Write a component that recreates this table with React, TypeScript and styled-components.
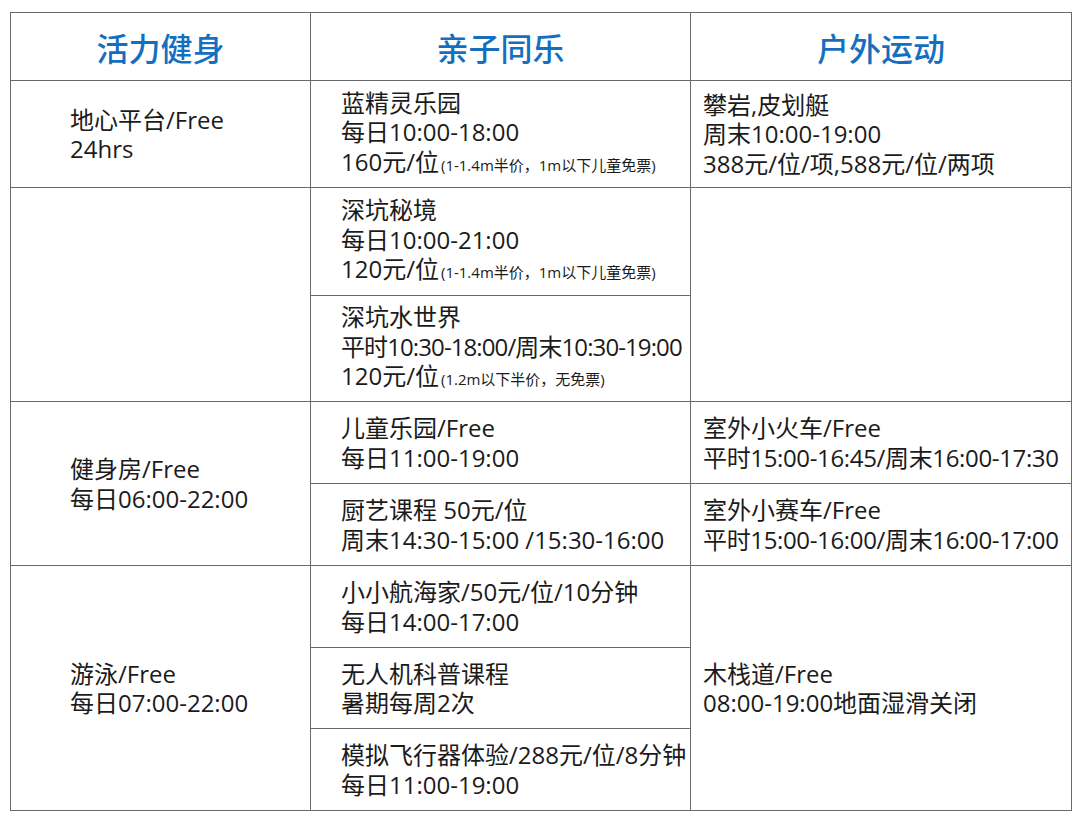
import React from "react";
import styled, { createGlobalStyle } from "styled-components";

const Global = createGlobalStyle`
  html, body { margin: 0; padding: 0; background: #ffffff; }
  body { font-family: "Open Sans", "Noto Sans CJK SC", sans-serif; color: #1b1b1b; }
`;

const Page = styled.div`
  padding: 12px 0 0 10px;
  width: 1080px;
  height: 819px;
  box-sizing: border-box;
`;

const Table = styled.div`
  display: grid;
  width: 1062px;
  box-sizing: border-box;
  grid-template-columns: 299px 379px 380px;
  grid-template-rows: 67px 106px 107px 105px 81px 81px 81px 80px 81px;
  gap: 1px;
  border: 1px solid #6a6a6a;
  background: #6a6a6a;
`;

type Col = 1 | 2 | 3;

const padFor: Record<Col, string> = {
  1: "0 8px 0 59px",
  2: "0 4px 0 30px",
  3: "0 4px 0 12px",
};

const Cell = styled.div<{ $col: Col; $row: number; $span?: number }>`
  grid-column: ${(p) => p.$col};
  grid-row: ${(p) => `${p.$row} / span ${p.$span ?? 1}`};
  background: #ffffff;
  display: flex;
  flex-direction: column;
  justify-content: center;
  padding: ${(p) => padFor[p.$col]};
  font-size: 24px;
  line-height: 29.5px;
  white-space: nowrap;
  box-sizing: border-box;
`;

const HeadCell = styled.div<{ $col: Col }>`
  grid-column: ${(p) => p.$col};
  grid-row: 1;
  background: #ffffff;
  display: flex;
  align-items: center;
  justify-content: center;
  color: #156fbf;
  font-size: 32px;
  font-family: "Noto Sans CJK SC", sans-serif;
  font-weight: 500;
  box-sizing: border-box;
`;

const Line = styled.div<{ $squeeze?: number }>`
  letter-spacing: ${(p) => (p.$squeeze ? `-${p.$squeeze}px` : "normal")};
`;

const Note = styled.span`
  font-size: 15px;
  letter-spacing: normal;
  margin-left: 2px;
`;

type LineSpec = { text: React.ReactNode; squeeze?: number };

type Entry = {
  col: Col;
  row: number;
  span?: number;
  lines: (React.ReactNode | LineSpec)[];
};

const isSpec = (l: React.ReactNode | LineSpec): l is LineSpec =>
  typeof l === "object" && l !== null && "text" in (l as object);

const entries: Entry[] = [
  { col: 1, row: 2, lines: ["地心平台/Free", "24hrs"] },
  { col: 1, row: 3, span: 2, lines: [] },
  { col: 1, row: 5, span: 2, lines: ["健身房/Free", "每日06:00-22:00"] },
  { col: 1, row: 7, span: 3, lines: ["游泳/Free", "每日07:00-22:00"] },
  {
    col: 2,
    row: 2,
    lines: [
      "蓝精灵乐园",
      "每日10:00-18:00",
      <>
        160元/位<Note>(1-1.4m半价，1m以下儿童免票)</Note>
      </>,
    ],
  },
  {
    col: 2,
    row: 3,
    lines: [
      "深坑秘境",
      "每日10:00-21:00",
      <>
        120元/位<Note>(1-1.4m半价，1m以下儿童免票)</Note>
      </>,
    ],
  },
  {
    col: 2,
    row: 4,
    lines: [
      "深坑水世界",
      { text: "平时10:30-18:00/周末10:30-19:00", squeeze: 0.9 },
      <>
        120元/位<Note>(1.2m以下半价，无免票)</Note>
      </>,
    ],
  },
  { col: 2, row: 5, lines: ["儿童乐园/Free", "每日11:00-19:00"] },
  { col: 2, row: 6, lines: ["厨艺课程 50元/位", "周末14:30-15:00 /15:30-16:00"] },
  { col: 2, row: 7, lines: ["小小航海家/50元/位/10分钟", "每日14:00-17:00"] },
  { col: 2, row: 8, lines: ["无人机科普课程", "暑期每周2次"] },
  { col: 2, row: 9, lines: ["模拟飞行器体验/288元/位/8分钟", "每日11:00-19:00"] },
  {
    col: 3,
    row: 2,
    lines: ["攀岩,皮划艇", "周末10:00-19:00", "388元/位/项,588元/位/两项"],
  },
  { col: 3, row: 3, span: 2, lines: [] },
  {
    col: 3,
    row: 5,
    lines: ["室外小火车/Free", { text: "平时15:00-16:45/周末16:00-17:30", squeeze: 0.35 }],
  },
  {
    col: 3,
    row: 6,
    lines: ["室外小赛车/Free", { text: "平时15:00-16:00/周末16:00-17:00", squeeze: 0.35 }],
  },
  { col: 3, row: 7, span: 3, lines: ["木栈道/Free", "08:00-19:00地面湿滑关闭"] },
];

const headers: { col: Col; text: string }[] = [
  { col: 1, text: "活力健身" },
  { col: 2, text: "亲子同乐" },
  { col: 3, text: "户外运动" },
];

export default function App() {
  return (
    <>
      <Global />
      <Page>
        <Table>
          {headers.map((h) => (
            <HeadCell key={h.col} $col={h.col}>
              {h.text}
            </HeadCell>
          ))}
          {entries.map((e, i) => (
            <Cell key={i} $col={e.col} $row={e.row} $span={e.span}>
              {e.lines.map((l, j) =>
                isSpec(l) ? (
                  <Line key={j} $squeeze={l.squeeze}>
                    {l.text}
                  </Line>
                ) : (
                  <Line key={j}>{l}</Line>
                )
              )}
            </Cell>
          ))}
        </Table>
      </Page>
    </>
  );
}
